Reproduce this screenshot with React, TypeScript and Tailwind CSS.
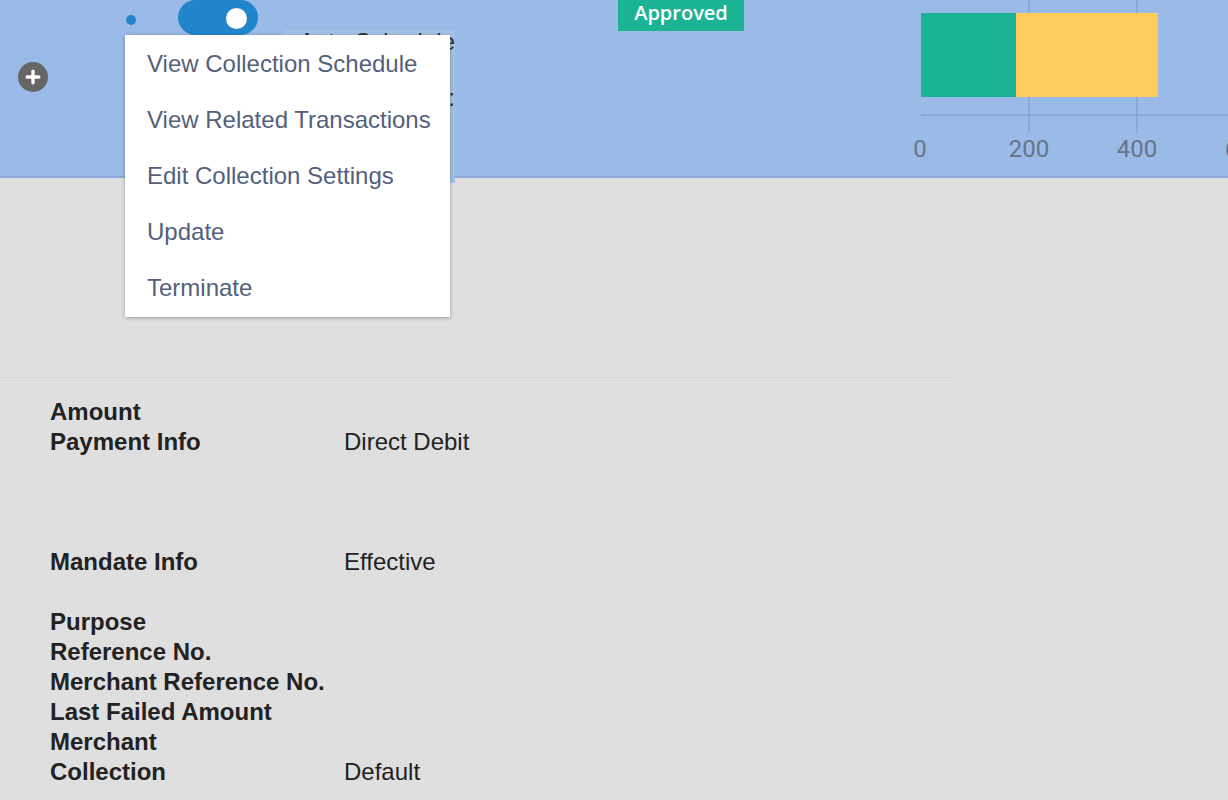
import { Plus } from "lucide-react";

const menuItems = [
  "View Collection Schedule",
  "View Related Transactions",
  "Edit Collection Settings",
  "Update",
  "Terminate",
];

type Row = { label?: string; value?: string; clip?: boolean };

const rows: Row[] = [
  { label: "Amount" },
  { label: "Payment Info", value: "Direct Debit" },
  {},
  {},
  {},
  { label: "Mandate Info", value: "Effective Date", clip: true },
  {},
  { label: "Purpose" },
  { label: "Reference No." },
  { label: "Merchant Reference No." },
  { label: "Last Failed Amount" },
  { label: "Merchant" },
  { label: "Collection", value: "Default" },
];

function UsageChart() {
  // 0 sits at x=16, 200 units = 108px
  const x = (v: number) => 16 + (v * 108) / 200;
  return (
    <svg width="340" height="176" className="block">
      {[200, 400, 600].map((v) => (
        <line key={v} x1={x(v)} x2={x(v)} y1={0} y2={133} stroke="#86a3cd" strokeWidth="1.5" />
      ))}
      <line x1={16} x2={340} y1={115} y2={115} stroke="#86a3cd" strokeWidth="1.5" />
      <rect x={x(0)} y={13} width={x(176) - x(0)} height={84} fill="#1bb394" />
      <rect x={x(176)} y={13} width={x(439) - x(176)} height={84} fill="#fecc5a" />
      {[0, 200, 400, 600].map((v) => (
        <text
          key={v}
          x={v === 0 ? x(v) - 1 : x(v)}
          y={157}
          textAnchor="middle"
          fontSize="24"
          fill="#687386"
          style={{ fontFamily: "Roboto, sans-serif" }}
        >
          {v}
        </text>
      ))}
    </svg>
  );
}

export default function App() {
  return (
    <div className="relative h-[800px] w-full overflow-hidden bg-[#dfdfdf] font-['Liberation_Sans',Arial,sans-serif]">
      <header className="flex h-[178px] items-start border-b-2 border-[#8aa9d6] bg-[#9abbe7]">
        <div className="ml-[18px] mt-[62px] flex h-[30px] w-[30px] shrink-0 items-center justify-center rounded-full bg-[#666666]">
          <Plus className="h-[20px] w-[20px] text-white" strokeWidth={4} />
        </div>
        <div className="ml-[78px] mt-[15px] h-[10px] w-[10px] shrink-0 rounded-full bg-[#2585cc]" />
        <div className="ml-[42px] flex h-[35px] w-[80px] shrink-0 items-center justify-end rounded-full bg-[#2284ca] pr-[11px] pt-[2px]">
          <div className="h-[21px] w-[21px] rounded-full bg-white" />
        </div>
        <div className="ml-[25px] mt-[30px] flex h-[153px] w-[172px] shrink-0 flex-col items-end gap-[32px] overflow-hidden bg-[#a4c1e6] text-[24px] leading-[24px] whitespace-nowrap text-[#333]">
          <span>Auto Schedule</span>
          <span>Status :</span>
        </div>
        <div className="ml-[163px] flex h-[31px] w-[126px] shrink-0 items-center justify-center bg-[#1bb394] pb-[5px] font-['Open_Sans',sans-serif] text-[20px] font-semibold text-white">
          Approved
        </div>
        <div className="ml-[161px] shrink-0">
          <UsageChart />
        </div>
      </header>

      <div className="mt-[199px] h-[2px] w-[955px] border-t border-[#d6d6d6] bg-[#e4e4e4]" />

      <div className="ml-[50px] mt-[18px] grid grid-cols-[294px_1fr] text-[24px] leading-[30px] text-[#222]">
        {rows.map((r, i) => (
          <div key={i} className="contents">
            <div className="h-[30px] font-bold">{r.label}</div>
            <div className="h-[30px]">
              {r.value &&
                (r.clip ? (
                  <div className="w-[99px] overflow-hidden whitespace-nowrap">{r.value}</div>
                ) : (
                  r.value
                ))}
            </div>
          </div>
        ))}
      </div>

      <div className="absolute left-[125px] top-[35px] w-[325px] bg-white py-px shadow-[0_1px_4px_rgba(0,0,0,0.3)]">
        {menuItems.map((m) => (
          <div key={m} className="flex h-[56px] items-center pl-[22px] text-[24px] text-[#535f7d]">
            {m}
          </div>
        ))}
      </div>
    </div>
  );
}
